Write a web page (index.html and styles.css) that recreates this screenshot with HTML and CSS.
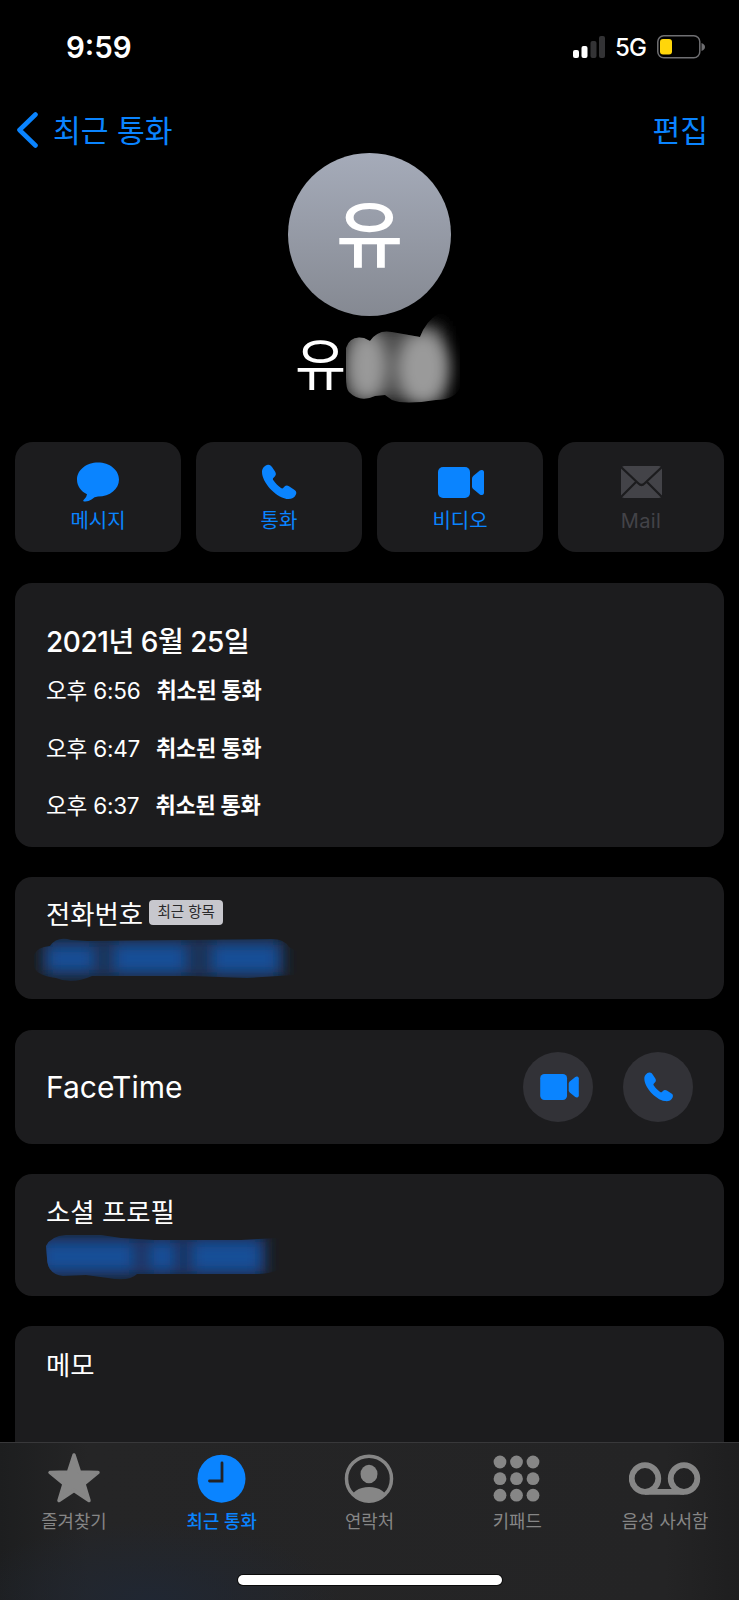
FILE: index.html
```html
<!DOCTYPE html>
<html lang="ko">
<head>
<meta charset="utf-8">
<title>연락처</title>
<link rel="stylesheet" href="styles.css">
</head>
<body>
<svg class="defs" width="0" height="0">
  <defs>
    <symbol id="phone" viewBox="0 0 36 36"><path d="M1 8C1 4 4 1 7 .7C9 .5 10 1.5 11 3L14.2 7.8C15.3 9.8 15 11.3 13.6 12.7L12.3 14C11.6 14.8 11.9 15.6 12.6 16.6C14.4 19.4 17 22 20 24C21 24.7 21.7 24.5 22.4 23.8L23.3 22.7C24.8 21.2 26.3 21.1 28 22.2L33.6 25.9C35.5 27.2 35.7 28.8 34.8 30.8C33.2 34.3 29.5 35.6 25.5 34.9C14 32.8 1 18 1 8Z"/></symbol>
    <symbol id="video" viewBox="0 0 46 31"><rect width="32" height="31" rx="5"/><path d="M34 11.5Q34 10 35.2 8.900L41.8 3.500Q43 2.700 44.300 3Q46 3.500 46 5V26Q46 27.500 44.300 28Q43 28.300 41.800 27.500L35.200 22.100Q34 21 34 19.500Z"/></symbol>
  </defs>
</svg>
<div class="screen">
  <header class="status">
    <span class="time">9:59</span>
    <div class="signals">
      <svg width="34" height="24" viewBox="0 0 34 24"><rect x="1" y="15" width="6" height="8" rx="2" fill="#fff"/><rect x="9.500" y="11" width="6" height="12" rx="2" fill="#fff"/><rect x="18.500" y="6" width="6" height="17" rx="2" fill="#333335"/><rect x="27" y="1" width="6" height="22" rx="2" fill="#333335"/></svg>
      <span class="network">5G</span>
      <svg width="48" height="24" viewBox="0 0 48 24"><rect x=".8" y=".8" width="42" height="22" rx="6" fill="none" stroke="#6f6f72" stroke-width="1.500"/><rect x="3" y="4" width="12" height="15.500" rx="3" fill="#ffd60a"/><path d="M44.500 8Q48 9.500 48 12T44.500 16Z" fill="#6f6f72"/></svg>
    </div>
  </header>
  <nav class="nav">
    <a class="back"><svg width="22" height="36" viewBox="0 0 22 36"><path d="M19.500 2.500L3.500 18L19.500 33.500" fill="none" stroke="#0a84ff" stroke-width="4.600" stroke-linecap="round" stroke-linejoin="round"/></svg><span>최근 통화</span></a>
    <a class="edit">편집</a>
  </nav>
  <section class="profile">
    <div class="avatar"><span>유</span></div>
    <div class="name"><span>유</span>
      <svg class="name-mask" width="116" height="98" viewBox="0 0 116 98">
        <defs><clipPath id="nameShape"><path d="M2 36Q6 23 20 26L26 29Q34 17 48 20L76 25Q82 9 94 2H116V76Q110 88 92 88Q60 93 48 88L41 83L31 84Q16 91 5 80Q2 77 2 65Z"/></clipPath><filter id="nameBlur" x="-60%" y="-40%" width="220%" height="180%"><feGaussianBlur stdDeviation="8"/></filter></defs>
        <g clip-path="url(#nameShape)"><rect x="0" y="14" width="98" height="76" fill="#4c4c4c" filter="url(#nameBlur)"/><g filter="url(#nameBlur)"><ellipse cx="23" cy="54" rx="20" ry="35" fill="#999"/><ellipse cx="79" cy="56" rx="26" ry="37" fill="#9a9a9a"/></g></g>
      </svg>
    </div>
  </section>
  <section class="actions">
    <div class="action"><svg width="42" height="40" viewBox="0 0 42 40"><path fill="#0a84ff" d="M21 .5C32.500.5 42 8 42 17.500S33 34.500 21 34.500Q17.500 34.500 14.500 37.500Q11 40 7.200 39.500Q5.300 39 7 37.500Q9.800 35 10 32.300C4 29.500 0 24 0 17.500C0 8 9.500.5 21 .5Z"/></svg><span>메시지</span></div>
    <div class="action"><svg width="36" height="36"><use href="#phone"/></svg><span>통화</span></div>
    <div class="action"><svg class="camera" width="46" height="31"><use href="#video"/></svg><span>비디오</span></div>
    <div class="action off"><svg width="41" height="32" viewBox="0 0 41 32"><rect width="41" height="32" rx="3.500" fill="#434348"/><path d="M0 1L17.500 17.500Q20.500 20.500 23.500 17.500L41 1M0 31L15 16M41 31L26 16" fill="none" stroke="#1c1c1e" stroke-width="2.200"/></svg><span>Mail</span></div>
  </section>
  <main class="cards">
    <section class="card history">
      <h2>2021년 6월 25일</h2>
      <p><span>오후 6:56</span><b>취소된 통화</b></p>
      <p><span>오후 6:47</span><b>취소된 통화</b></p>
      <p><span>오후 6:37</span><b>취소된 통화</b></p>
    </section>
    <section class="card field">
      <div class="label"><span>전화번호</span><span class="badge">최근 항목</span></div>
      <svg class="phone-mask" width="270" height="48" viewBox="0 0 270 48">
        <defs><clipPath id="phoneShape"><path d="M2 20Q5 12 18 11Q25 1 39 5L55 6L240 4Q252 4 257 12L268 18V34L262 40L215 43L160 41H60Q40 50 24 43Q3 40 2 31Z"/></clipPath><filter id="fieldBlur" x="-40%" y="-60%" width="180%" height="220%"><feGaussianBlur stdDeviation="7"/></filter></defs>
        <g clip-path="url(#phoneShape)"><rect x="10" y="2" width="242" height="42" fill="#1c3058" filter="url(#fieldBlur)"/><g fill="#185098" filter="url(#fieldBlur)"><rect x="16" y="12" width="46" height="23"/><rect x="82" y="10" width="72" height="27"/><rect x="180" y="10" width="66" height="27"/></g></g>
      </svg>
    </section>
    <section class="card facetime">
      <span>FaceTime</span>
      <div class="calls"><i class="round"><svg class="small-camera" width="39" height="26"><use href="#video"/></svg></i><i class="round"><svg width="31" height="30"><use href="#phone"/></svg></i></div>
    </section>
    <section class="card field social">
      <div class="label"><span>소셜 프로필</span></div>
      <svg class="social-mask" width="250" height="48" viewBox="0 0 250 48">
        <defs><clipPath id="socialShape"><path d="M0 12Q5 2 20 1H55L75 4L108 6H195L230 4L244 8V30Q228 40 212 40H91Q83 48 62 44L40 41L17 42Q1 40 1 24Z"/></clipPath></defs>
        <g clip-path="url(#socialShape)"><rect x="-8" y="0" width="228" height="44" fill="#1a3360" filter="url(#fieldBlur)"/><g fill="#185098" filter="url(#fieldBlur)"><rect x="-4" y="9" width="92" height="27"/><rect x="103" y="9" width="26" height="27"/><rect x="146" y="8" width="68" height="29"/></g></g>
      </svg>
    </section>
    <section class="card memo"><div class="label"><span>메모</span></div></section>
  </main>
  <footer class="tabs">
    <div class="tab"><svg class="star" width="54" height="50" viewBox="0 0 54 50"><path d="M27 1L32.500 18L51 18.500L37 30L42 46.500L27 36.500L12 46.500L17 30L3 18.500L21.500 18Z" fill="#868686" stroke="#868686" stroke-width="3.500" stroke-linejoin="round"/></svg><span>즐겨찾기</span></div>
    <div class="tab on"><svg width="50" height="50" viewBox="0 0 50 50"><circle cx="24.500" cy="24.700" r="24" fill="#0a84ff"/><path d="M25 9V27H12.500" fill="none" stroke="#222326" stroke-width="2.800" stroke-linecap="round"/></svg><span>최근 통화</span></div>
    <div class="tab"><svg width="50" height="50" viewBox="0 0 50 50"><defs><clipPath id="face"><circle cx="25" cy="24.700" r="23"/></clipPath></defs><circle cx="25" cy="24.700" r="22.500" fill="none" stroke="#868686" stroke-width="3.500"/><g fill="#868686" clip-path="url(#face)"><ellipse cx="25" cy="20" rx="8.500" ry="9.300"/><ellipse cx="25" cy="45.500" rx="18.500" ry="12.500"/></g></svg><span>연락처</span></div>
    <div class="tab"><svg width="48" height="50" viewBox="0 0 48 50"><g fill="#868686"><circle cx="7" cy="8" r="6.400"/><circle cx="23.500" cy="8" r="6.400"/><circle cx="40" cy="8" r="6.400"/><circle cx="7" cy="24.700" r="6.400"/><circle cx="23.500" cy="24.700" r="6.400"/><circle cx="40" cy="24.700" r="6.400"/><circle cx="7" cy="41.200" r="6.400"/><circle cx="23.500" cy="41.200" r="6.400"/><circle cx="40" cy="41.200" r="6.400"/></g></svg><span>키패드</span></div>
    <div class="tab"><svg width="72" height="50" viewBox="0 0 72 50"><g fill="none" stroke="#868686" stroke-width="5.800"><circle cx="16" cy="24.500" r="13.300"/><circle cx="55" cy="24.500" r="13.300"/><path d="M16 37.800H55"/></g></svg><span>음성 사서함</span></div>
    <div class="home"></div>
  </footer>
</div>
</body>
</html>
```
FILE: styles.css
```css
* { box-sizing: border-box; }
body { margin: 0; background: #000; color: #fff; font-family: Inter, "Noto Sans CJK KR", sans-serif; }
svg { display: block; flex: none; }
.defs { position: absolute; }
.screen { width: 739px; height: 1600px; overflow: hidden; position: relative; background: #000; }
.status { height: 94px; padding: 0 34px 0 66px; display: flex; justify-content: space-between; align-items: center; }
.time { font-size: 29.500px; font-weight: 600; line-height: 40px; }
.signals { display: flex; align-items: center; }
.network { font-size: 24px; font-weight: 500; line-height: 30px; width: 31px; margin: 2px 11px 0 9px; letter-spacing: -0.8px; }
.nav { height: 59px; padding: 14px 31px 0 16px; display: flex; justify-content: space-between; color: #0a84ff; font-size: 30.200px; line-height: 46px; }
.back { display: flex; gap: 15px; }
.back svg { margin-top: 4px; }
.profile { height: 289px; display: flex; flex-direction: column; align-items: center; }
.avatar { width: 163px; height: 163px; border-radius: 50%; background: linear-gradient(#a5abb9, #858992); display: flex; justify-content: center; font-size: 73px; font-weight: 500; line-height: 163px; }
.name { width: 149px; height: 88px; margin-top: 5px; position: relative; font-size: 55.500px; line-height: 88px; }
.name-mask { position: absolute; left: 49px; top: -9px; }
.actions { display: grid; grid-template-columns: repeat(4, 166px); gap: 15px; padding: 0 15px; }
.action { height: 110px; border-radius: 18px; background: #1c1c1e; color: #0a84ff; fill: #0a84ff; font-size: 20px; line-height: 28px; text-align: center; display: grid; grid-template-rows: 62px 28px; align-content: start; justify-items: center; align-items: center; padding-top: 9px; }
.action span { align-self: start; margin-top: -6px; }
.camera { margin-left: 2px; }
.action.off { color: #434348; letter-spacing: .4px; }
.cards { padding: 31px 15px 0; display: flex; flex-direction: column; gap: 30.300px; }
.card { background: #1c1c1e; border-radius: 17px; padding-left: 31px; }
.history { height: 264px; padding-top: 39px; }
.history h2 { margin: 0; font-size: 28px; font-weight: 500; letter-spacing: -.45px; line-height: 40px; height: 40px; }
.history p { margin: 0; font-size: 22.500px; line-height: 57.500px; display: flex; gap: 16px; letter-spacing: -.2px; }
.history b { font-size: 22px; font-weight: 700; }
.field { height: 122px; padding-top: 18px; }
.label { display: flex; gap: 6px; font-size: 26.400px; line-height: 38px; }
.badge { align-self: flex-start; margin-top: 5px; width: 74px; height: 25px; border-radius: 4px; background: #c7c7cd; color: #29292b; font-size: 14.500px; line-height: 24px; text-align: center; }
.phone-mask { margin: 2px 0 0 -14px; }
.social { padding-top: 19px; }
.social-mask { margin-top: 3px; }
.facetime { height: 114px; padding-right: 31px; display: flex; justify-content: space-between; align-items: center; font-size: 30px; }
.calls { display: flex; gap: 30px; }
.round { width: 70px; height: 70px; border-radius: 50%; background: #323237; fill: #0a84ff; display: grid; place-items: center; }
.small-camera { margin-left: 3px; }
.memo { height: 200px; padding-top: 20px; }
.tabs { position: absolute; left: 0; right: 0; bottom: 0; height: 158px; padding-top: 11px; border-top: 1px solid #38383a; background: radial-gradient(ellipse 190px 80px at 150px 158px, #202733, transparent), linear-gradient(90deg, #1d1e1f, #252526 12%, #242425 90%, #1e1e1f); display: grid; grid-template-columns: repeat(5, 1fr); align-content: start; }
.tab { display: flex; flex-direction: column; align-items: center; color: #868686; font-size: 17.800px; line-height: 26px; gap: 5px; }
.tab.on { color: #0a84ff; font-weight: 500; }
.star { overflow: visible; }
.home { position: absolute; left: 238px; bottom: 15px; width: 264px; height: 10px; border-radius: 5px; background: #fff; box-shadow: 0 0 0 1px #0b0b0b; }
```
